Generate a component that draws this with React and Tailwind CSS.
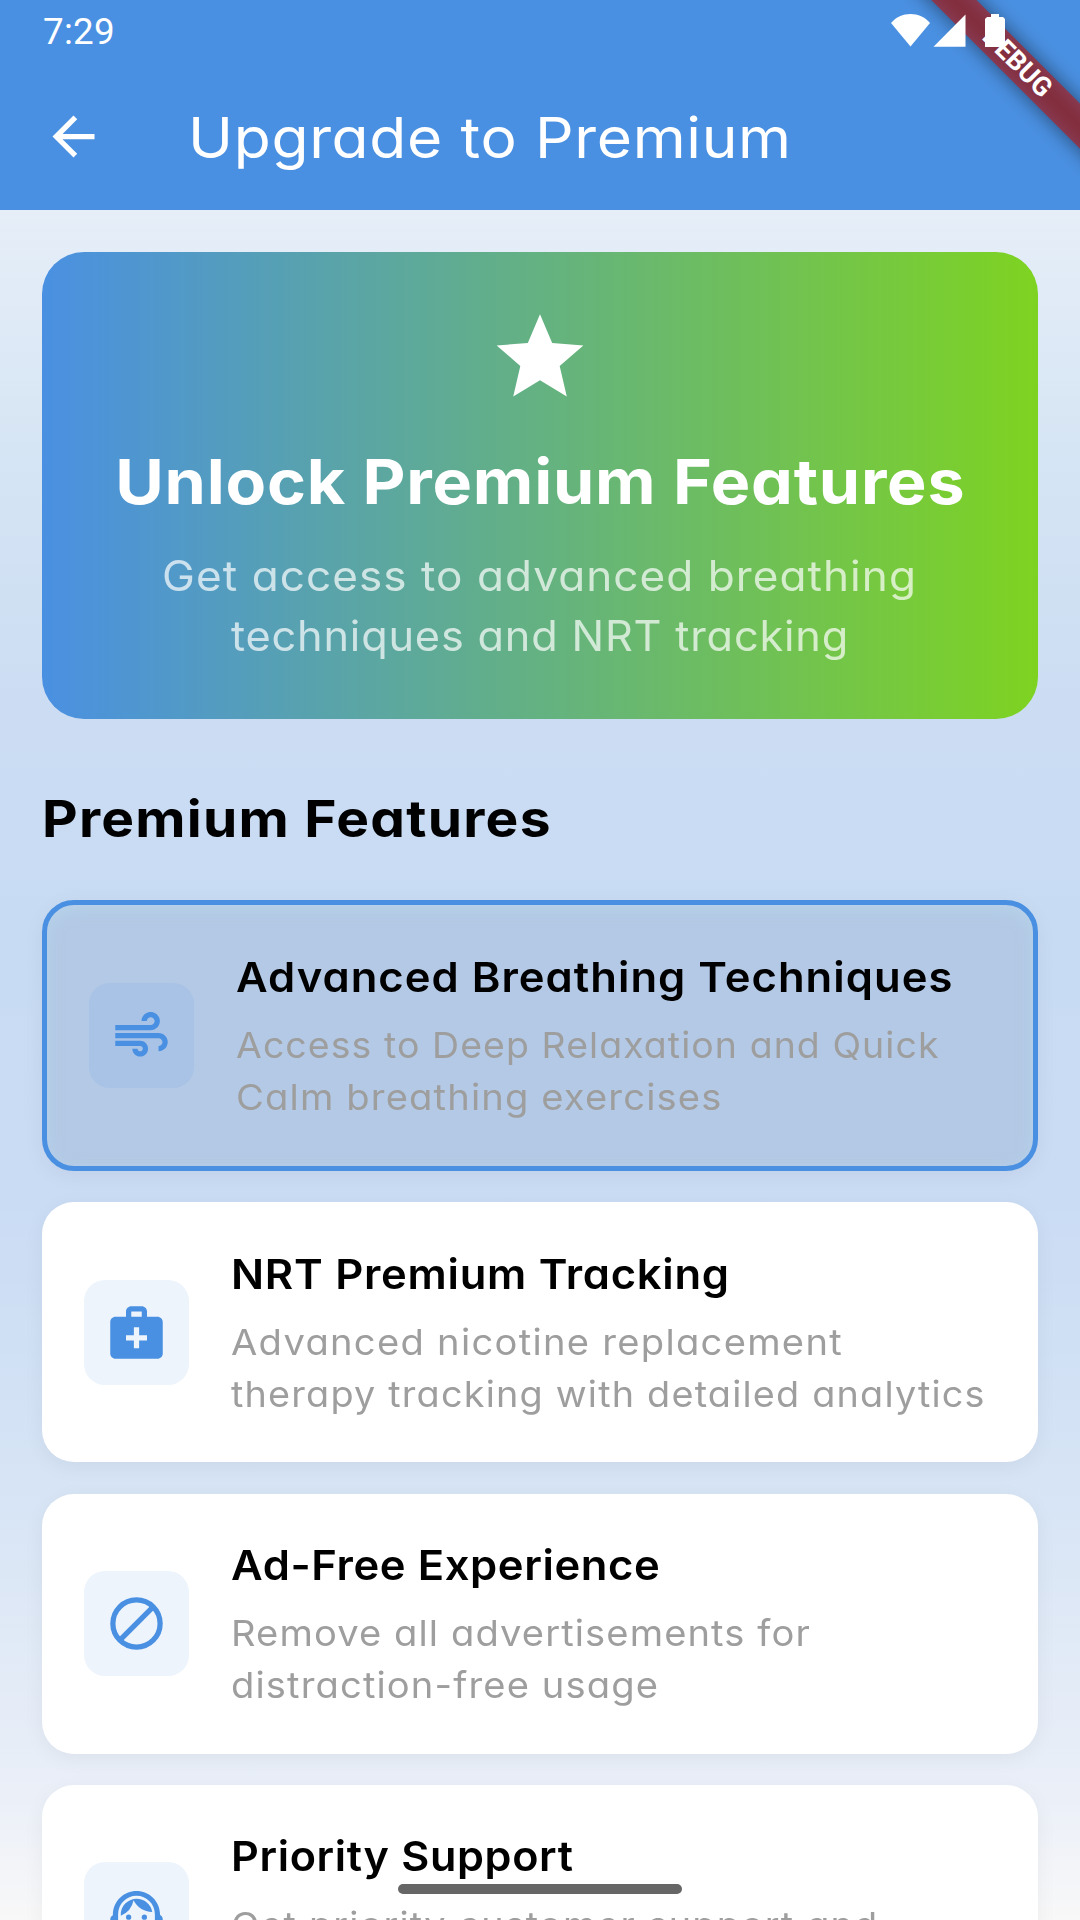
import React from 'react';
import { MdAir, MdArrowBack, MdMedicalServices, MdStar, MdSupportAgent } from 'react-icons/md';

function SlashedCircle({ className }) {
  return (
    <svg viewBox="0 0 24 24" className={className} fill="none" stroke="currentColor" strokeWidth="2">
      <circle cx="12" cy="12" r="9" />
      <path d="M5.2 18.8 L18.8 5.2" />
    </svg>
  );
}

const features = [
  {
    title: 'Advanced Breathing Techniques',
    titleClass: 'tracking-[0.97px] scale-x-[1.05]',
    lines: [
      ['Access to Deep Relaxation and Quick', 'tracking-[1.03px] scale-x-[1.04]'],
      ['Calm breathing exercises', 'tracking-[1.07px] scale-x-[1.06]'],
    ],
    Icon: MdAir,
    selected: true,
  },
  {
    title: 'NRT Premium Tracking',
    titleClass: 'tracking-[0.69px] scale-x-[1.05]',
    lines: [
      ['Advanced nicotine replacement', 'tracking-[1.2px] scale-x-[1.06]'],
      ['therapy tracking with detailed analytics', 'tracking-[1.13px] scale-x-[1.05]'],
    ],
    Icon: MdMedicalServices,
  },
  {
    title: 'Ad-Free Experience',
    titleClass: 'tracking-[0.56px] scale-x-[1.05]',
    lines: [
      ['Remove all advertisements for', 'tracking-[1.02px] scale-x-[1.06]'],
      ['distraction-free usage', 'tracking-[1.05px] scale-x-[1.06]'],
    ],
    Icon: SlashedCircle,
  },
  {
    title: 'Priority Support',
    titleClass: 'tracking-[0.63px] scale-x-[1.04]',
    lines: [['Get priority customer support and', 'tracking-[1.13px] scale-x-[1.05]']],
    Icon: MdSupportAgent,
  },
];

function StatusBar() {
  return (
    <div className="relative z-20 flex h-[63px] items-start justify-between pl-[43px] pr-[75px] text-white">
      <span className="mt-[10px] font-['Roboto',sans-serif] text-[36.75px] leading-[44px] tracking-[0.26px]">7:29</span>
      <div className="mt-[14px] flex">
        <svg viewBox="0 0 39 33" className="h-[33px] w-[39px]" fill="currentColor">
          <path d="M0 9 C5 3 12 0 19.500 0 C27 0 34 3 39 9 L19.500 32.500 Z" />
        </svg>
        <svg viewBox="0 0 33 33" className="ml-[3px] h-[33px] w-[33px]" fill="currentColor">
          <path d="M0.500 32.700 L32.500 0.500 V32.700 Z" />
        </svg>
        <svg viewBox="0 0 20 33" className="ml-[19px] h-[33px] w-[20px]" fill="currentColor">
          <path d="M6 0 H14 V3 H18 L20 5 V33 H0 V5 L2 3 H6 Z" />
        </svg>
      </div>
    </div>
  );
}

function DebugBanner() {
  return (
    <div className="pointer-events-none absolute right-0 top-0 z-10 h-[210px] w-[260px] overflow-hidden">
      <div className="absolute left-[47px] top-[47px] h-[31.500px] w-[300px] rotate-45 bg-black/50 blur-[10px]" />
      <div className="absolute left-[47px] top-[47px] flex h-[31.500px] w-[300px] rotate-45 items-center justify-center bg-[#b71c1c]/63 font-['Roboto',sans-serif] text-[26.800px] leading-none font-bold text-white">
        DEBUG
      </div>
    </div>
  );
}

function FeatureCard({ title, titleClass, lines, Icon, selected }) {
  return (
    <div
      className={
        selected
          ? 'flex h-[271px] shrink-0 items-center rounded-[32px] border-[5px] border-[#4a90e2] bg-[#b3c9e5] px-[42px] shadow-[0_5px_21px_rgba(0,0,0,0.05),inset_0_5px_16px_rgba(184,214,236,0.75)]'
          : 'flex h-[260px] shrink-0 items-center rounded-[32px] bg-white px-[42px] shadow-[0_5px_21px_rgba(0,0,0,0.05)]'
      }
    >
      <div
        className={
          selected
            ? 'flex size-[105px] shrink-0 items-center justify-center rounded-[21px] bg-[#a8c3e6]'
            : 'flex size-[105px] shrink-0 items-center justify-center rounded-[21px] bg-[#edf4fc]'
        }
      >
        <Icon className="size-[63px] text-[#4a90e2]" />
      </div>
      <div className="ml-[42px] flex flex-col items-start pb-[2px] whitespace-nowrap">
        <h3 className={`origin-left text-[41.500px] leading-[63px] font-semibold text-black ${titleClass}`}>{title}</h3>
        <p className="mt-[10.500px] flex min-h-[104px] flex-col items-start text-[36px] leading-[52px] text-[#9e9e9e]">
          {lines.map(([text, cls]) => (
            <span key={text} className={`origin-left ${cls}`}>{text}</span>
          ))}
        </p>
      </div>
    </div>
  );
}

export default function App() {
  return (
    <div className="relative flex h-[1920px] w-[1080px] flex-col overflow-hidden bg-[linear-gradient(180deg,#e6eef8_210px,#d6e5f4_450px,#ccddf3_700px,#c7dbf3_930px,#cadcf4_1200px,#d6e4f5_1480px,#eaeff8_1790px,#f8f8f8_1920px)] font-['Inter',sans-serif] [font-feature-settings:'cv11']">
      <header className="flex h-[210px] shrink-0 flex-col bg-[#4a90e2] text-white">
        <StatusBar />
        <div className="flex h-[147px] items-center pl-[42px]">
          <MdArrowBack className="size-[63px] shrink-0" />
          <h1 className="ml-[83px] origin-left scale-x-[1.08] pt-[3px] text-[56px] leading-[84px] tracking-[0.62px] whitespace-nowrap">Upgrade to Premium</h1>
        </div>
      </header>
      <DebugBanner />

      <main className="flex flex-col px-[42px] pt-[42px]">
        <section className="flex h-[467px] shrink-0 flex-col items-center rounded-[42px] bg-linear-to-r/srgb from-[#4a90e2] to-[#7ed321] pt-[52.500px] whitespace-nowrap text-white">
          <MdStar className="size-[105px] shrink-0 pr-px" />
          <h2 className="mt-[27px] scale-x-[1.07] text-[62px] leading-[90px] font-bold tracking-[0.75px]">Unlock Premium Features</h2>
          <p className="mt-[19px] flex flex-col items-center text-[42px] leading-[60px] text-white/70">
            <span className="scale-x-[1.05] tracking-[0.99px]">Get access to advanced breathing</span>
            <span className="scale-x-[1.03] tracking-[0.79px]">techniques and NRT tracking</span>
          </p>
        </section>

        <h2 className="mt-[60px] origin-left scale-x-[1.08] self-start text-[51px] leading-[79px] font-bold tracking-[1.15px] text-black">Premium Features</h2>

        <div className="mt-[42px] flex flex-col gap-[31.300px]">
          {features.map((feature) => (
            <FeatureCard key={feature.title} {...feature} />
          ))}
        </div>
      </main>

      <div className="absolute bottom-[26px] left-[398px] h-[10px] w-[284px] rounded-full bg-[#666666]" />
    </div>
  );
}
